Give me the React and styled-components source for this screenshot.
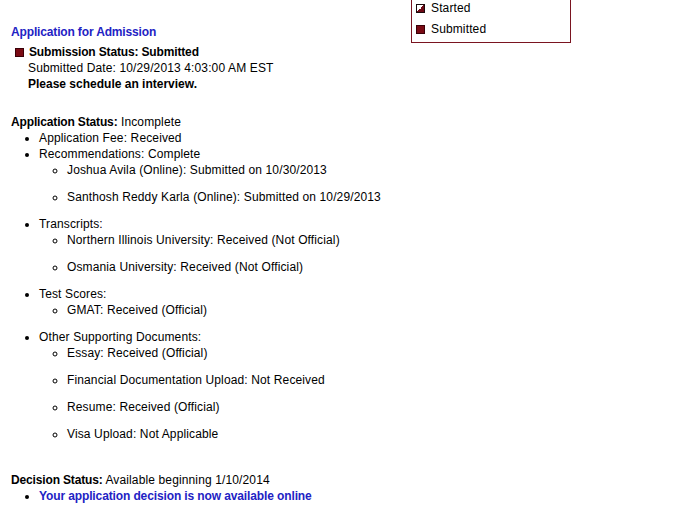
import React from 'react'
import styled, { createGlobalStyle } from 'styled-components';

const GlobalStyle = createGlobalStyle`
  body {
    margin: 0;
    background: #fff;
    font-family: "Liberation Sans", Arial, sans-serif;
    font-size: 12px;
    line-height: 16px;
    color: #000;
    letter-spacing: 0.13px;
  }
`;

const Page = styled.div`
  display: flex;
  align-items: flex-start;
  padding: 0 0 20px 11px;
`;

const Main = styled.div`
  flex: 0 0 400px;
  padding-top: 24px;
`;

const Title = styled.div`
  color: #2222c4;
  font-weight: bold;
  letter-spacing: -0.15px;
`;

const Submission = styled.div`
  margin-top: 4px;
  padding-left: 4px;
`;

const StatusRow = styled.div`
  display: flex;
  align-items: center;
  gap: 5px;
  font-weight: bold;
  letter-spacing: -0.15px;
`;

const Square = styled.span`
  display: inline-block;
  width: 9px;
  height: 9px;
  box-sizing: border-box;
  background: #7a0a14;
  border: 1px solid #3a0008;
  flex: none;
`;

const HalfSquare = styled.span`
  display: inline-block;
  width: 9px;
  height: 9px;
  box-sizing: border-box;
  border: 1px solid #1a0a0c;
  background: linear-gradient(to bottom right, #fff 0 50%, #6e0a16 50% 100%);
  flex: none;
`;

const Indented = styled.div`
  padding-left: 13px;
  font-weight: ${p => (p.$bold ? 'bold' : 'normal')};
  letter-spacing: ${p => (p.$bold ? '0px' : '0.13px')};
`;

const Section = styled.div`
  margin-top: ${p => p.$gap}px;
`;

const Label = styled.span`
  font-weight: bold;
  letter-spacing: -0.15px;
`;

const List = styled.ul`
  margin: 0;
  padding-left: 28px;
  list-style-type: ${p => (p.$nested ? 'circle' : 'disc')};
`;

const Item = styled.li`
  margin-bottom: ${p => (p.$spaced ? 11 : 0)}px;
`;

const Link = styled.a`
  color: #2222c4;
  font-weight: bold;
  text-decoration: none;
  letter-spacing: -0.12px;
`;

const Legend = styled.div`
  margin-top: -5px;
  width: 160px;
  box-sizing: border-box;
  border: 1px solid #7a1420;
  padding: 4px 4px 5px;
  display: flex;
  flex-direction: column;
  gap: 5px;
  background: #fff;
`;

const LegendRow = styled.div`
  display: flex;
  align-items: center;
  gap: 6px;
`;

const groups = [
  { name: 'Application Fee: Received', items: [] },
  {
    name: 'Recommendations: Complete',
    items: [
      'Joshua Avila (Online): Submitted on 10/30/2013',
      'Santhosh Reddy Karla (Online): Submitted on 10/29/2013',
    ],
  },
  {
    name: 'Transcripts:',
    items: [
      'Northern Illinois University: Received (Not Official)',
      'Osmania University: Received (Not Official)',
    ],
  },
  { name: 'Test Scores:', items: ['GMAT: Received (Official)'] },
  {
    name: 'Other Supporting Documents:',
    items: [
      'Essay: Received (Official)',
      'Financial Documentation Upload: Not Received',
      'Resume: Received (Official)',
      'Visa Upload: Not Applicable',
    ],
  },
];

export default function App() {
  return (
    <>
      <GlobalStyle />
      <Page>
        <Main>
          <Title>Application for Admission</Title>
          <Submission>
            <StatusRow>
              <Square />
              Submission Status: Submitted
            </StatusRow>
            <Indented>Submitted Date: 10/29/2013 4:03:00 AM EST</Indented>
            <Indented $bold>Please schedule an interview.</Indented>
          </Submission>

          <Section $gap={22}>
            <Label>Application Status:</Label> Incomplete
            <List>
              {groups.map(g => (
                <Item key={g.name}>
                  {g.name}
                  {g.items.length > 0 && (
                    <List $nested>
                      {g.items.map(i => (
                        <Item key={i} $spaced>{i}</Item>
                      ))}
                    </List>
                  )}
                </Item>
              ))}
            </List>
          </Section>

          <Section $gap={30}>
            <Label>Decision Status:</Label> Available beginning 1/10/2014
            <List>
              <Item>
                <Link href="#">Your application decision is now available online</Link>
              </Item>
            </List>
          </Section>
        </Main>

        <Legend>
          <LegendRow>
            <HalfSquare />
            Started
          </LegendRow>
          <LegendRow>
            <Square />
            Submitted
          </LegendRow>
        </Legend>
      </Page>
    </>
  )
}
